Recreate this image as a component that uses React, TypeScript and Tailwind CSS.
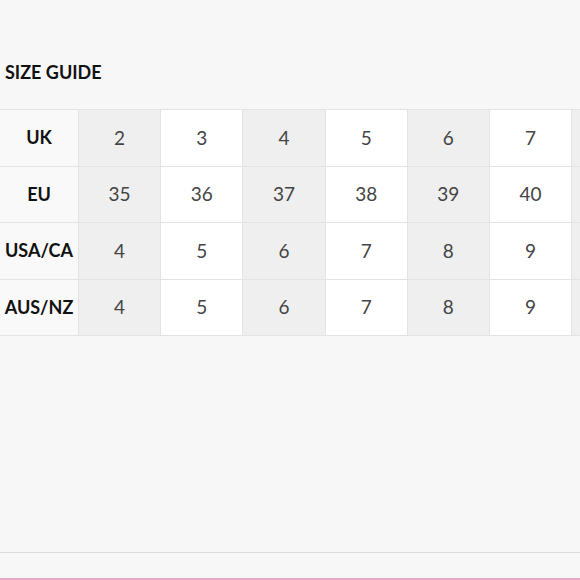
const rows = [
  { label: 'UK', values: ['2', '3', '4', '5', '6', '7', ''] },
  { label: 'EU', values: ['35', '36', '37', '38', '39', '40', ''] },
  { label: 'USA/CA', values: ['4', '5', '6', '7', '8', '9', ''] },
  { label: 'AUS/NZ', values: ['4', '5', '6', '7', '8', '9', ''] },
];

function App() {
  return (
    <div className="h-[580px] w-[580px] overflow-hidden bg-[#f7f7f7] font-['Lato',sans-serif] flex flex-col">
      <h1 className="pt-[60px] pl-[5px] h-[84px] leading-6 text-[18px] font-bold text-[#111]">
        SIZE GUIDE
      </h1>
      <div className="mt-[25px] w-max border-t border-[#e3e3e3]">
        {rows.map((row) => (
          <div key={row.label} className="flex">
            <div className="w-[79px] h-[56.5px] shrink-0 flex items-center justify-center border-r border-b border-[#e3e3e3] bg-[#f9f9f9] text-[18px] font-bold text-[#111]">
              {row.label}
            </div>
            {row.values.map((v, i) => (
              <div
                key={i}
                className={`w-[82.2px] h-[56.5px] shrink-0 flex items-center justify-center border-r border-b border-[#e3e3e3] text-[19px] text-[#444] ${
                  i % 2 === 0 ? 'bg-[#efefef]' : 'bg-white'
                }`}
              >
                {v}
              </div>
            ))}
          </div>
        ))}
      </div>
      <div className="flex-1" />
      <div className="h-[26px] border-t border-[#dcdcdc]" />
      <div className="h-[2px] bg-[#eaa7c6]" />
    </div>
  );
}

export default App;
